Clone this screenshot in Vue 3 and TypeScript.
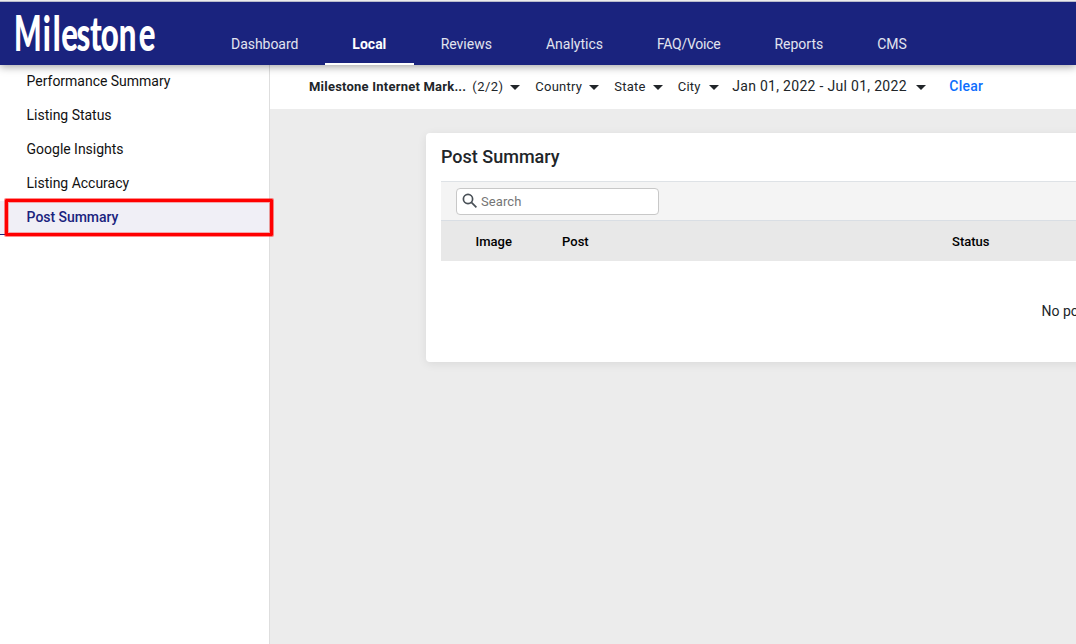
<script setup lang="ts">
interface Filter {
  id: string
  label: string
  count?: string
}

interface Tab {
  id: string
  label: string
}

const tabs: Tab[] = [
  { id: 'dashboard', label: 'Dashboard' },
  { id: 'local', label: 'Local' },
  { id: 'reviews', label: 'Reviews' },
  { id: 'analytics', label: 'Analytics' },
  { id: 'faq', label: 'FAQ/Voice' },
  { id: 'reports', label: 'Reports' },
  { id: 'cms', label: 'CMS' },
]
const activeTab = 'local'

const sections: string[] = [
  'Performance Summary',
  'Listing Status',
  'Google Insights',
  'Listing Accuracy',
  'Post Summary',
]
const activeSection = 'Post Summary'

const filters: Filter[] = [
  { id: 'account', label: 'Milestone Internet Mark...', count: '(2/2)' },
  { id: 'country', label: 'Country' },
  { id: 'state', label: 'State' },
  { id: 'city', label: 'City' },
  { id: 'dates', label: 'Jan 01, 2022 - Jul 01, 2022' },
]
</script>

<template>
  <div class="app">
    <header class="topbar">
      <svg class="logo" width="150" height="50" viewBox="0 0 150 50" role="img" aria-label="Milestone">
        <g transform="translate(-1 44) scale(0.58 1)">
          <text class="logo-cap" x="0" y="0">M</text>
        </g>
        <g transform="translate(0.5 44) scale(0.65 1)">
          <text class="logo-text" x="42 57.5 70.5 94 114.5 131 159 189.5" y="0">ilestone</text>
        </g>
      </svg>
      <nav class="tabs">
        <a v-for="tab in tabs" :key="tab.id" class="tab" :class="[tab.id, { active: tab.id === activeTab }]">{{
          tab.label
        }}</a>
      </nav>
    </header>

    <div class="body">
      <aside class="sidebar">
        <a
          v-for="section in sections"
          :key="section"
          class="section"
          :class="{ active: section === activeSection }"
        >
          {{ section }}
          <span v-if="section === activeSection" class="marker"></span>
        </a>
      </aside>

      <main class="main">
        <div class="filters">
          <div v-for="f in filters" :key="f.id" class="filter" :class="f.id">
            <span class="label">{{ f.label }}</span>
            <span v-if="f.count" class="count">{{ f.count }}</span>
            <svg class="caret" width="10" height="5" viewBox="0 0 10 5"><path d="M0 0h10L5 5z" /></svg>
          </div>
          <a class="clear">Clear</a>
        </div>

        <section class="card">
          <h1>Post Summary</h1>
          <div class="toolbar">
            <label class="search">
              <svg width="16" height="16" viewBox="0 0 16 16">
                <circle cx="6" cy="6" r="4.6" />
                <path d="M9.4 9.4l5 5" />
              </svg>
              <input type="text" placeholder="Search" />
            </label>
          </div>
          <div class="thead">
            <span>Image</span>
            <span>Post</span>
            <span>Status</span>
          </div>
          <div class="empty">No posts found</div>
        </section>
      </main>
    </div>
  </div>
</template>

<style>
html,
body {
  margin: 0;
  overflow: hidden;
}
</style>

<style scoped>
.app {
  box-sizing: border-box;
  display: flex;
  flex-direction: column;
  width: 100vw;
  height: 100vh;
  overflow: hidden;
  background: #ececec;
  border-top: 1px solid #ececec;
  font-family: Roboto, "Liberation Sans", sans-serif;
  font-size: 14px;
  color: #212529;
}
.topbar {
  position: relative;
  z-index: 2;
  box-sizing: border-box;
  display: flex;
  flex: none;
  height: 64px;
  padding-left: 15px;
  border-top: 1px solid #b9bbcb;
  background: #1a237e;
  box-shadow: 0 2px 8px rgba(0, 0, 0, 0.35);
}
.logo {
  flex: none;
  width: 150px;
  height: 50px;
  margin: 5px 39px 0 0;
  overflow: visible;
}
.logo text {
  font-family: Lato, "Liberation Sans", sans-serif;
  font-weight: 900;
  fill: #fff;
}
.logo-cap {
  font-size: 50px;
}
.logo-text {
  font-size: 48px;
}
.tabs {
  display: flex;
}
.tab {
  box-sizing: border-box;
  height: 63px;
  padding: 33px 27px 0;
  line-height: 18px;
  color: #e2e3ef;
  white-space: nowrap;
}
.tab.dashboard {
  letter-spacing: -0.04px;
}
.tab.local {
  padding-right: 27.3px;
}
.tab.faq {
  letter-spacing: -0.26px;
}
.tab.active {
  border-bottom: 2px solid #fff;
  font-weight: 700;
  color: #fff;
}
.body {
  display: flex;
  flex: 1;
  min-height: 0;
}
.sidebar {
  box-sizing: border-box;
  flex: none;
  width: 270px;
  background: #fff;
  border-right: 1px solid #dedede;
}
.section {
  position: relative;
  box-sizing: border-box;
  display: block;
  height: 34px;
  padding-left: 26.6px;
  line-height: 32px;
  letter-spacing: -0.02px;
  color: #111;
}
.section.active {
  border-bottom: 1px solid #1a237e;
  background: #f0eff6;
  font-weight: 500;
  letter-spacing: -0.05px;
  color: #1a237e;
}
.marker {
  position: absolute;
  top: -2px;
  left: 5px;
  box-sizing: border-box;
  width: 268px;
  height: 37px;
  border: 3px solid #f00;
  border-radius: 1px;
  box-shadow:
    0 0 0 1px rgba(255, 0, 0, 0.45),
    inset 0 0 0 1px rgba(255, 0, 0, 0.3);
}
.main {
  flex: 1;
  min-width: 0;
}
.filters {
  box-sizing: border-box;
  display: flex;
  align-items: center;
  height: 44px;
  padding: 0 0 1px 39px;
  background: #fff;
  white-space: nowrap;
}
.filter {
  display: flex;
  align-items: center;
  margin-right: 15px;
  font-size: 13px;
  letter-spacing: 0.25px;
}
.filter.account .label {
  font-weight: 700;
  letter-spacing: 0.22px;
}
.count {
  margin-left: 6px;
  letter-spacing: 0.4px;
}
.filter.city {
  margin-right: 13.5px;
}
.filter.city .caret {
  margin-left: 8px;
}
.filter.dates {
  margin-right: 23px;
  padding-bottom: 1px;
  font-size: 14px;
  letter-spacing: 0.3px;
}
.caret {
  margin: 2px 0 0 7px;
  fill: #212529;
}
.filter.dates .caret {
  margin: 3px 0 0 9.5px;
}
.clear {
  padding-bottom: 1px;
  font-weight: 500;
  letter-spacing: 0.25px;
  color: #0d6efd;
}
.card {
  box-sizing: border-box;
  width: 1000px;
  height: 229px;
  margin: 24px 0 0 156px;
  padding: 0 15px;
  background: #fff;
  border-radius: 4px;
  box-shadow: 0 2px 10px rgba(0, 0, 0, 0.08);
}
h1 {
  margin: 0;
  height: 48px;
  font-size: 18px;
  font-weight: 500;
  line-height: 48px;
}
.toolbar {
  box-sizing: border-box;
  height: 39px;
  padding: 6px 15px 0;
  border-top: 1px solid #dee2e6;
  background: #f4f4f4;
}
.search {
  box-sizing: border-box;
  display: flex;
  align-items: center;
  width: 203px;
  height: 27px;
  padding-left: 5px;
  border: 1px solid #c8c8c8;
  border-radius: 4px;
  background: #fff;
}
.search svg {
  flex: none;
  margin-top: -1px;
  fill: none;
  stroke: #495057;
  stroke-width: 1.7;
}
.search input {
  width: 160px;
  margin: 0;
  padding: 0 0 0 3px;
  border: 0;
  outline: 0;
  background: none;
  font: 13px Roboto, "Liberation Sans", sans-serif;
  letter-spacing: 0.1px;
}
.search input::placeholder {
  color: #757575;
}
.thead {
  box-sizing: border-box;
  display: grid;
  grid-template-columns: 86.5px 390px 1fr;
  height: 41px;
  padding: 1px 0 0 34.5px;
  border-top: 1px solid #d9dee4;
  background: #e8e8e8;
  font-size: 13px;
  font-weight: 500;
  line-height: 40px;
  letter-spacing: 0.02px;
  color: #000;
}
.empty {
  margin-left: 600.5px;
  line-height: 100px;
  white-space: nowrap;
}
</style>
